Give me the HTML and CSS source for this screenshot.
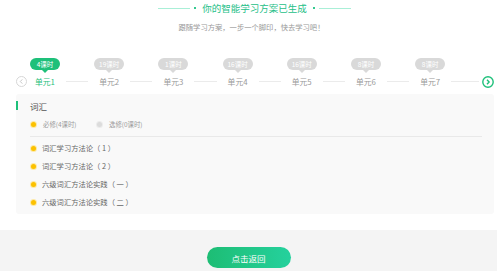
FILE: index.html
```html
<!DOCTYPE html>
<html lang="zh">
<head>
    <meta charset="UTF-8">
    <meta name="viewport" content="width=device-width, initial-scale=1.0">
    <title>学习方案</title>
    <link rel="stylesheet" href="styles.css">
</head>
<body>
    <div class="header">
        <h2 class="title">
            <span class="deco-line"></span><span class="deco-dot"></span>
            <span class="title-text">你的智能学习方案已生成</span>
            <span class="deco-dot"></span><span class="deco-line"></span>
        </h2>
        <p class="subtitle">跟随学习方案，一步一个脚印，快去学习吧！</p>
    </div>

    <div class="timeline">
        <span class="arrow arrow-left">
            <svg width="11" height="11" viewBox="0 0 11 11"><circle cx="5.5" cy="5.5" r="5" fill="none" stroke="#d6d6d6" stroke-width="1"/><path d="M6.3 3.4 L4.3 5.5 L6.3 7.6" fill="none" stroke="#c8c8c8" stroke-width="1"/></svg>
        </span>
        <div class="unit active"><span class="badge">4课时</span><span class="label">单元1</span></div>
        <span class="link"></span>
        <div class="unit"><span class="badge">19课时</span><span class="label">单元2</span></div>
        <span class="link"></span>
        <div class="unit"><span class="badge">1课时</span><span class="label">单元3</span></div>
        <span class="link"></span>
        <div class="unit"><span class="badge">16课时</span><span class="label">单元4</span></div>
        <span class="link"></span>
        <div class="unit"><span class="badge">16课时</span><span class="label">单元5</span></div>
        <span class="link"></span>
        <div class="unit"><span class="badge">8课时</span><span class="label">单元6</span></div>
        <span class="link"></span>
        <div class="unit"><span class="badge">8课时</span><span class="label">单元7</span></div>
        <span class="link link-end"></span>
        <span class="arrow arrow-right">
            <svg width="12" height="12" viewBox="0 0 12 12"><circle cx="6" cy="6" r="5.2" fill="none" stroke="#1ec07a" stroke-width="1.4"/><path d="M5 3.8 L7.1 6 L5 8.2" fill="none" stroke="#1ec07a" stroke-width="1.4"/></svg>
        </span>
    </div>

    <div class="card">
        <h3 class="card-title">词汇</h3>
        <div class="legend">
            <span class="legend-item"><i class="dot"></i>必修(4课时)</span>
            <span class="legend-item"><i class="dot dot-gray"></i>选修(0课时)</span>
        </div>
        <ul class="lessons">
            <li><i class="dot"></i>词汇学习方法论（ 1 ）</li>
            <li><i class="dot"></i>词汇学习方法论（ 2 ）</li>
            <li><i class="dot"></i>六级词汇方法论实践（ 一 ）</li>
            <li><i class="dot"></i>六级词汇方法论实践（ 二 ）</li>
        </ul>
    </div>

    <footer class="footer">
        <button class="back-btn">点击返回</button>
    </footer>
</body>
</html>
```

FILE: styles.css
```css
* { margin: 0; padding: 0; box-sizing: border-box; }
body {
    font-family: "Noto Sans CJK SC", "Noto Sans", sans-serif;
    background: #fff;
    color: #666;
    width: 497px;
    height: 271px;
    overflow: hidden;
}
.header { text-align: center; }
.title {
    display: flex;
    justify-content: center;
    align-items: center;
    height: 16px;
    font-size: 9.5px;
    font-weight: normal;
    color: #26c088;
    padding-left: 12px;
}
.deco-line {
    width: 32px;
    height: 1px;
    background: #a9efd7;
}
.deco-dot {
    width: 2px;
    height: 2px;
    background: #33c98f;
    margin: 0 4px;
}
.title-text { margin: 0 2px; line-height: 16px; }
.subtitle {
    margin-top: 6px;
    padding-left: 6px;
    font-size: 7.3px;
    line-height: 10px;
    color: #999;
}
.timeline {
    display: flex;
    align-items: flex-end;
    margin-top: 26px;
    padding: 0 3px 0 16px;
}
.arrow { display: flex; height: 12px; }
.arrow-left { width: 11px; margin-bottom: 0.5px; }
.unit {
    flex: 0 0 36px;
    display: flex;
    flex-direction: column;
    align-items: center;
}
.badge {
    position: relative;
    height: 12px;
    min-width: 30px;
    padding: 0 4px;
    border-radius: 6px;
    background: #d9d9d9;
    color: #fff;
    font-size: 6.5px;
    line-height: 12px;
    text-align: center;
    white-space: nowrap;
}
.badge::after {
    content: "";
    position: absolute;
    left: 50%;
    bottom: -3px;
    margin-left: -3px;
    border-left: 3px solid transparent;
    border-right: 3px solid transparent;
    border-top: 3px solid #d9d9d9;
}
.label {
    margin-top: 6px;
    font-size: 7.8px;
    line-height: 12px;
    color: #999;
}
.active .badge { background: #1ec07a; }
.active .badge::after { border-top-color: #1ec07a; }
.active .label { color: #1ec07a; }
.link {
    flex: 0 0 22.2px;
    height: 1px;
    background: #ebebeb;
    margin: 0 3px 6px;
}
.link-end { flex: 1; }
.card {
    margin: 6px 3px 0 16px;
    background: #f9f9f9;
    border-radius: 3px;
    padding: 6px 12px 3px 14px;
    height: 120px;
}
.card-title {
    position: relative;
    font-size: 8.5px;
    font-weight: normal;
    line-height: 12px;
    color: #555;
}
.card-title::before {
    content: "";
    position: absolute;
    left: -14px;
    top: 1px;
    width: 2px;
    height: 9px;
    background: #1ec07a;
}
.legend {
    display: flex;
    margin-top: 7px;
    height: 10px;
    align-items: center;
    font-size: 6.4px;
    color: #999;
    padding-bottom: 7px;
    box-sizing: content-box;
    border-bottom: 1px solid #e9e9e9;
}
.legend-item {
    display: flex;
    align-items: center;
    width: 66px;
}
.dot {
    display: inline-block;
    width: 5px;
    height: 5px;
    border-radius: 50%;
    background: #fcc100;
    box-shadow: 0 0 0 1px #fde9a6;
    margin: 0 7px 0 1px;
}
.dot-gray { background: #dcdcdc; box-shadow: 0 0 0 1px #ececec; }
.lessons {
    list-style: none;
    margin-top: 2px;
}
.lessons li {
    display: flex;
    align-items: center;
    height: 18px;
    font-size: 7.3px;
    color: #666;
    white-space: pre;
}
.lessons .dot { margin-right: 6px; }
.footer {
    margin-top: 16px;
    height: 41px;
    background: #f4f4f4;
    display: flex;
    justify-content: center;
    padding-top: 17px;
}
.back-btn {
    width: 84px;
    height: 21px;
    border: none;
    border-radius: 11px;
    background: linear-gradient(90deg, #1dbd74, #25d19d);
    color: #fff;
    font-family: inherit;
    font-size: 8.5px;
    cursor: pointer;
}
```
